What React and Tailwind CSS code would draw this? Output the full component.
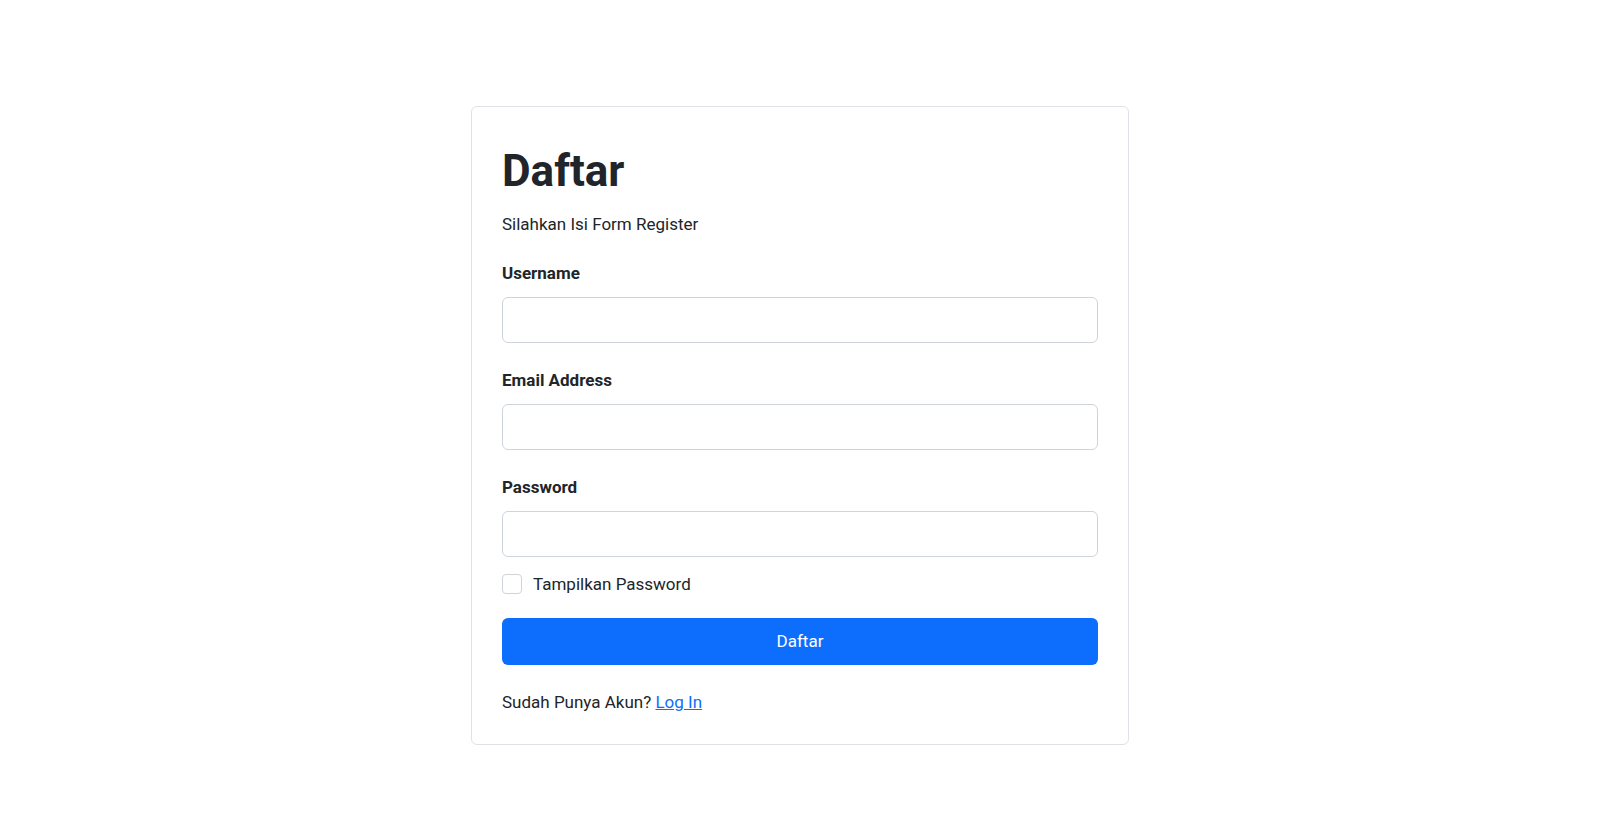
import { useState } from 'react';

export default function App() {
    const [form, setForm] = useState({ username: '', email: '', password: '' });
    const [showPassword, setShowPassword] = useState(false);

    const set = (key) => (e) => setForm({ ...form, [key]: e.target.value });

    const inputClass =
        'mt-[12px] block w-full h-[46px] px-4 rounded-[6px] border border-[#ced4da] bg-white text-[17px] text-[#212529] outline-none focus:border-[#86b7fe]';
    const labelClass = 'block text-[17px] leading-[24px] font-bold text-[#212529]';

    return (
        <div className="min-h-screen bg-white pt-[106px] font-['Roboto',sans-serif] text-[#212529]">
            <div className="ml-[471px] w-[658px] rounded-[6px] border border-[#dee2e6] bg-white p-[30px]">
                <h1 className="mt-[8px] text-[44px] leading-[52px] font-bold text-[#212529]">Daftar</h1>
                <p className="mt-[15px] text-[17px] leading-[24px]">Silahkan Isi Form Register</p>

                <form onSubmit={(e) => e.preventDefault()}>
                    <div className="mt-[25px]">
                        <label htmlFor="username" className={labelClass}>Username</label>
                        <input id="username" type="text" value={form.username} onChange={set('username')} className={inputClass} />
                    </div>

                    <div className="mt-[25px]">
                        <label htmlFor="email" className={labelClass}>Email Address</label>
                        <input id="email" type="email" value={form.email} onChange={set('email')} className={inputClass} />
                    </div>

                    <div className="mt-[25px]">
                        <label htmlFor="password" className={labelClass}>Password</label>
                        <input
                            id="password"
                            type={showPassword ? 'text' : 'password'}
                            value={form.password}
                            onChange={set('password')}
                            className={inputClass}
                        />
                    </div>

                    <label className="mt-[15px] flex h-[24px] items-center gap-[11px] text-[17px] leading-[24px] cursor-pointer">
                        <input
                            type="checkbox"
                            checked={showPassword}
                            onChange={(e) => setShowPassword(e.target.checked)}
                            className="appearance-none w-[20px] h-[20px] rounded-[4px] border border-[#ced4da] bg-white checked:bg-[#0d6efd] checked:border-[#0d6efd]"
                        />
                        Tampilkan Password
                    </label>

                    <button
                        type="submit"
                        className="mt-[22px] block w-full h-[47px] rounded-[6px] bg-[#0d6efd] text-[17px] text-white"
                    >
                        Daftar
                    </button>

                    <p className="mt-[25px] text-[17px] leading-[24px]">
                        Sudah Punya Akun?{' '}
                        <a href="#" className="text-[#0d6efd] underline">Log In</a>
                    </p>
                </form>
            </div>
        </div>
    );
}
